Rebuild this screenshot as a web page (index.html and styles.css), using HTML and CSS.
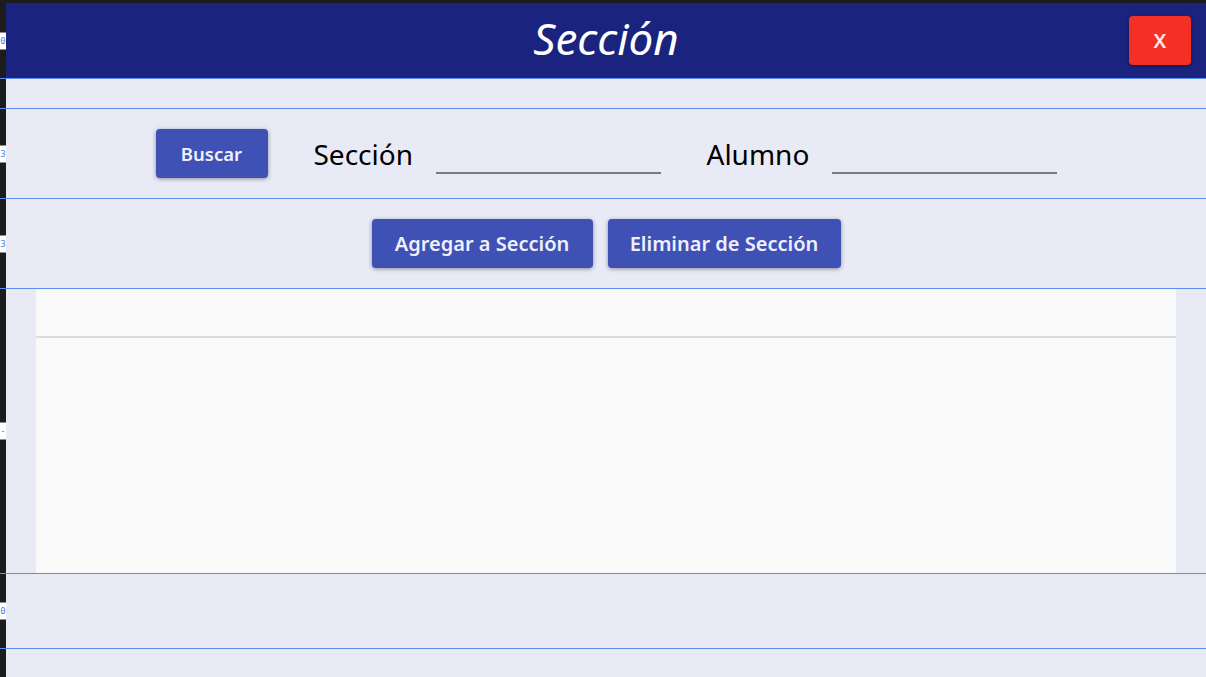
FILE: index.html
```html
<!DOCTYPE html>
<html lang="es">
<head>
<meta charset="utf-8">
<title>Sección</title>
<link rel="stylesheet" href="styles.css">
</head>
<body>
<div class="window">
  <div class="topbar"></div>
  <header class="row header">
    <span class="guide"><span>0</span></span>
    <div class="head-inner">
      <div></div>
      <h1 class="title">Sección</h1>
      <button class="close">X</button>
    </div>
  </header>
  <div class="row spacer"></div>
  <div class="row search">
    <span class="guide"><span>3</span></span>
    <div class="search-inner">
      <button class="btn btn-buscar">Buscar</button>
      <label class="lbl lbl-seccion">Sección</label>
      <input class="field" type="text">
      <label class="lbl lbl-alumno">Alumno</label>
      <input class="field" type="text">
    </div>
  </div>
  <div class="row actions">
    <span class="guide"><span>3</span></span>
    <div class="actions-inner">
      <button class="btn btn-add">Agregar a Sección</button>
      <button class="btn btn-del">Eliminar de Sección</button>
    </div>
  </div>
  <div class="row table-row">
    <span class="guide"><span class="dash">-</span></span>
    <div class="table">
      <div class="thead"></div>
      <div class="tbody"></div>
    </div>
  </div>
  <div class="row footer">
    <span class="guide"><span>0</span></span>
  </div>
  <div class="row bottom"></div>
</div>
</body>
</html>
```

FILE: styles.css
```css
* { box-sizing: border-box; }

html, body {
  margin: 0;
  padding: 0;
  background: #1c1c1c;
  font-family: "Noto Sans", "Open Sans", sans-serif;
}

.window {
  width: 1206px;
  height: 677px;
  overflow: hidden;
  background: #1c1c1c;
}

.topbar {
  height: 3px;
  background: #1c1c1c;
}

.row {
  position: relative;
  display: flex;
  padding-left: 6px;
  border-top: 1px solid #5b8ef0;
  background: linear-gradient(to right, #1c1c1c 6px, #e8eaf6 6px);
}

.guide {
  position: absolute;
  left: 0;
  top: 50%;
  transform: translateY(-50%);
  width: 6px;
  height: 17px;
  background: #ffffff;
  display: flex;
  justify-content: center;
  align-items: center;
}

.guide span {
  font-family: "DejaVu Sans Mono", monospace;
  font-size: 9px;
  color: #4a7fe6;
  line-height: 1;
}

.header {
  height: 75px;
  border-top: none;
  background: linear-gradient(to right, #1c1c1c 6px, #1a237e 6px);
}

.head-inner {
  flex: 1;
  display: grid;
  grid-template-columns: 1fr auto 1fr;
  align-items: center;
}

.title {
  margin: 0;
  font-family: "Noto Sans", sans-serif;
  font-style: italic;
  font-weight: 400;
  font-size: 44px;
  line-height: 1;
  color: #ffffff;
  padding-bottom: 6px;
}

.close {
  justify-self: end;
  margin-right: 15px;
  width: 62px;
  height: 49px;
  border: none;
  border-radius: 4px;
  background: #f42f24;
  color: #fbe9e7;
  font-family: "Noto Sans", sans-serif;
  font-weight: 600;
  font-size: 20px;
  box-shadow: 0 1px 3px rgba(0, 0, 0, 0.45);
  padding: 0;
}

.spacer {
  height: 30px;
}

.search {
  height: 90px;
}

.search-inner {
  flex: 1;
  display: flex;
  align-items: center;
  justify-content: center;
}

.btn {
  height: 49px;
  border: none;
  border-radius: 4px;
  background: #3f51b5;
  color: #eef0fb;
  font-family: "Noto Sans", sans-serif;
  font-weight: 600;
  font-size: 20px;
  box-shadow: 0 1px 4px rgba(0, 0, 0, 0.4);
  padding: 0;
}

.btn-buscar {
  width: 112px;
  margin-right: 46px;
  font-size: 18.5px;
}

.lbl {
  font-family: "Noto Sans", sans-serif;
  font-size: 28px;
  color: #000000;
  white-space: nowrap;
}

.lbl-seccion {
  width: 122px;
}

.lbl-alumno {
  width: 125px;
}

.field {
  width: 225px;
  height: 40px;
  margin-top: 0;
  border: none;
  border-bottom: 2px solid #777a84;
  background: transparent;
  outline: none;
}

.field + .lbl {
  margin-left: 46px;
}

.actions {
  height: 90px;
}

.actions-inner {
  flex: 1;
  display: flex;
  justify-content: center;
  align-items: center;
  gap: 15px;
  padding-bottom: 1px;
}

.btn-add {
  width: 221px;
}

.btn-del {
  width: 233px;
}

.table-row {
  height: 285px;
}

.table {
  flex: 1;
  margin: 0 30px;
  background: #fafafa;
  display: flex;
  flex-direction: column;
}

.thead {
  height: 49px;
  border-bottom: 2px solid #dcdcdc;
}

.tbody {
  flex: 1;
}

.footer {
  height: 75px;
}

.bottom {
  height: 40px;
}
```
